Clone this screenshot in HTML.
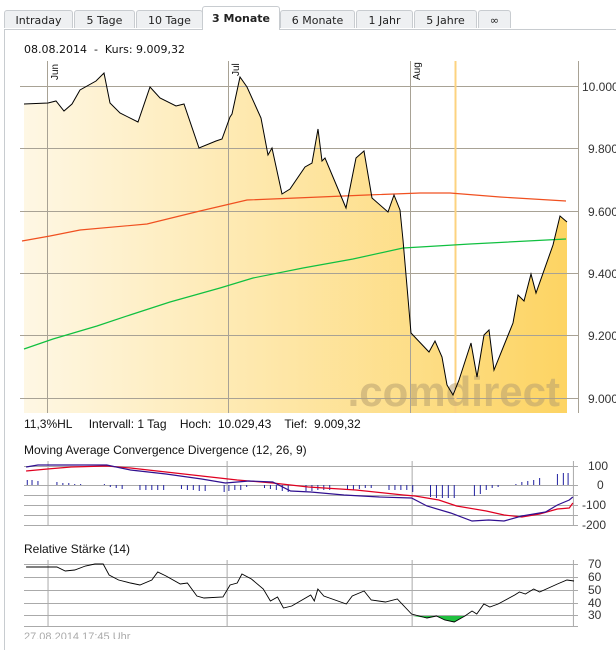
<!DOCTYPE html>
<html><head><meta charset="utf-8"><style>
body{margin:0;background:#fff;font-family:"DejaVu Sans",Verdana,sans-serif;}
.tab{position:absolute;top:10px;height:18px;background:#eef0f2;border:1px solid #c8ccd0;border-bottom:none;border-radius:3px 3px 0 0;font-size:11px;text-align:center;line-height:19px;color:#222;box-sizing:border-box;}
.tab.act{top:6px;height:24px;background:#fff;font-weight:bold;line-height:24px;}
</style></head><body>
<div style="position:absolute;left:4px;top:29px;width:620px;height:620px;border-left:1px solid #c8ccd0;border-top:1px solid #c8ccd0"></div>
<div class="tab" style="left:4px;width:69px">Intraday</div>
<div class="tab" style="left:74px;width:61px">5 Tage</div>
<div class="tab" style="left:136px;width:67px">10 Tage</div>
<div class="tab act" style="left:202px;width:78px">3 Monate</div>
<div class="tab" style="left:280px;width:75px">6 Monate</div>
<div class="tab" style="left:356px;width:57px">1 Jahr</div>
<div class="tab" style="left:414px;width:63px">5 Jahre</div>
<div class="tab" style="left:478px;width:33px">∞</div>
<svg width="616" height="639" style="position:absolute;left:0;top:0" font-family="Liberation Sans,Arial,sans-serif">
<defs><linearGradient id="g" x1="0" x2="1"><stop offset="0" stop-color="#fef7e4"/><stop offset="1" stop-color="#fdd463"/></linearGradient></defs>
<text x="24" y="53" font-size="11" fill="#111" font-family="DejaVu Sans,Verdana,sans-serif" xml:space="preserve">08.08.2014  -  Kurs: 9.009,32</text>
<polygon fill="url(#g)" points="24,413 24,104 48,103 56,101 64,111 72,104 80,90 96,81 104,73 110,103 120,113 138,122 150,87 160,98 176,106 184,104 199,148 216,141 222,139 230,117 232,114 240,77 247,87 261,118 268,155 272,148 282,194 290,189 305,167 312,163 318,129 322,161 325,158 346,208 356,158 364,151 372,198 388,212 394,195 400,210 403,240 411,333 429,352 435,341 442,357 447,385 453,395 459,380 471,343 477,377 484,335 489,330 494,370 513,323 518,295 524,301 531,274 536,293 553,245 560,216 567,222 567,413"/>
<g stroke="#a8a295" stroke-width="1">
<line x1="20" x2="578" y1="86.5" y2="86.5"/><line x1="20" x2="578" y1="148.5" y2="148.5"/><line x1="20" x2="578" y1="211.5" y2="211.5"/><line x1="20" x2="578" y1="273.5" y2="273.5"/><line x1="20" x2="578" y1="335.5" y2="335.5"/><line x1="20" x2="578" y1="398.5" y2="398.5"/>
<line x1="47.5" x2="47.5" y1="61" y2="413"/><line x1="228.5" x2="228.5" y1="61" y2="413"/><line x1="410.5" x2="410.5" y1="61" y2="413"/><line x1="578.5" x2="578.5" y1="61" y2="413"/>
</g>
<line x1="455.5" x2="455.5" y1="61" y2="413" stroke="#fcd380" stroke-width="2"/>
<text x="560" y="406" font-size="42" font-weight="bold" fill="#b8a070" fill-opacity="0.55" text-anchor="end">.comdirect</text>
<g font-size="10" fill="#111"><text transform="translate(58,80) rotate(-90)">Jun</text><text transform="translate(239,76) rotate(-90)">Jul</text><text transform="translate(420,80) rotate(-90)">Aug</text></g>
<polyline fill="none" stroke="#f05020" stroke-width="1.2" points="22,241 50,236 80,230 147,224 200,211 247,200 320,197 367,195 420,193 450,193 500,197 566,201"/>
<polyline fill="none" stroke="#10c040" stroke-width="1.2" points="24,349 53,339 97,326 130,315 170,302 220,288 253,278 303,268 353,259 403,248 420,247 470,244 566,239"/>
<polyline fill="none" stroke="#000" stroke-width="1" points="24,104 48,103 56,101 64,111 72,104 80,90 96,81 104,73 110,103 120,113 138,122 150,87 160,98 176,106 184,104 199,148 216,141 222,139 230,117 232,114 240,77 247,87 261,118 268,155 272,148 282,194 290,189 305,167 312,163 318,129 322,161 325,158 346,208 356,158 364,151 372,198 388,212 394,195 400,210 403,240 411,333 429,352 435,341 442,357 447,385 453,395 459,380 471,343 477,377 484,335 489,330 494,370 513,323 518,295 524,301 531,274 536,293 553,245 560,216 567,222"/>
<g font-size="12" fill="#333"><text x="582" y="91">10.000</text><text x="588" y="153">9.800</text><text x="588" y="216">9.600</text><text x="588" y="278">9.400</text><text x="588" y="340">9.200</text><text x="588" y="403">9.000</text></g>
<text x="24" y="428" font-size="12" fill="#111" xml:space="preserve">11,3%HL     Intervall: 1 Tag    Hoch:  10.029,43    Tief:  9.009,32</text>
<text x="24" y="454" font-size="12" fill="#111">Moving Average Convergence Divergence (12, 26, 9)</text>
<g stroke="#aaa"><line x1="24" x2="578" y1="466.5" y2="466.5"/><line x1="24" x2="578" y1="485.5" y2="485.5"/><line x1="24" x2="578" y1="495.5" y2="495.5"/><line x1="24" x2="578" y1="505.5" y2="505.5"/><line x1="24" x2="578" y1="515.5" y2="515.5"/><line x1="24" x2="578" y1="525.5" y2="525.5"/></g>
<g font-size="12" fill="#333"><text x="588" y="470">100</text><text x="597" y="489">0</text><text x="582" y="509">-100</text><text x="582" y="529">-200</text></g>
<text x="24" y="553" font-size="12" fill="#111">Relative Stärke (14)</text>
<g stroke="#aaa"><line x1="24" x2="578" y1="564.5" y2="564.5"/><line x1="24" x2="578" y1="577.5" y2="577.5"/><line x1="24" x2="578" y1="590.5" y2="590.5"/><line x1="24" x2="578" y1="603.5" y2="603.5"/><line x1="24" x2="578" y1="615.5" y2="615.5"/><line x1="24" x2="578" y1="626.5" y2="626.5"/></g>
<g font-size="12" fill="#333"><text x="588" y="568">70</text><text x="588" y="581">60</text><text x="588" y="594">50</text><text x="588" y="607">40</text><text x="588" y="619">30</text></g>
<g transform="matrix(1.186,0,0,1,0,0)">
<g stroke="#aaa">
<line x1="40.5" x2="40.5" y1="461" y2="526" vector-effect="non-scaling-stroke"/><line x1="191.5" x2="191.5" y1="461" y2="526" vector-effect="non-scaling-stroke"/><line x1="347.5" x2="347.5" y1="461" y2="526" vector-effect="non-scaling-stroke"/><line x1="483.5" x2="483.5" y1="461" y2="526" vector-effect="non-scaling-stroke"/>
<line x1="40.5" x2="40.5" y1="560" y2="627" vector-effect="non-scaling-stroke"/><line x1="191.5" x2="191.5" y1="560" y2="627" vector-effect="non-scaling-stroke"/><line x1="347.5" x2="347.5" y1="560" y2="627" vector-effect="non-scaling-stroke"/><line x1="483.5" x2="483.5" y1="560" y2="627" vector-effect="non-scaling-stroke"/></g>
<path stroke="#2020a0" vector-effect="non-scaling-stroke" d="M23 480V485M27 480V485M32 481V485M48 482V485M53 483V485M58 483V485M63 484V485M68 484V485M88 484V485M93 485V487M98 485V488M103 485V489M118 485V490M123 485V490M128 485V490M133 485V490M138 485V490M153 485V489M158 485V490M163 485V490M168 485V491M173 485V491M189 485V492M193 485V491M198 485V490M203 485V490M208 485V487M223 485V488M228 485V489M233 485V490M238 485V491M243 485V492M258 485V491M263 485V491M268 485V490M273 485V490M278 485V490M293 485V490M298 485V490M303 485V489M308 485V488M313 485V488M328 485V490M333 485V490M338 485V490M343 485V490M348 485V492M363 485V497M368 485V498M373 485V498M378 485V498M383 485V498M400 485V496M405 485V494M410 485V490M415 485V488M420 485V487M435 484V485M440 482V485M445 481V485M450 480V485M455 478V485M470 474V485M475 473V485M479 473V485"/>
<polyline fill="none" stroke="#e00020" stroke-width="1.2" vector-effect="non-scaling-stroke" points="22,471 40,469 60,467 90,466 110,468 140,472 170,476 200,480 230,483 260,487 300,490 340,495 350,496 370,500 385,506 410,511 425,515 440,517 455,514 470,509 480,508 483,503"/>
<polyline fill="none" stroke="#301090" stroke-width="1.2" vector-effect="non-scaling-stroke" points="22,467 32,465 90,465 110,470 140,474 170,479 190,483 210,481 230,482 245,491 262,492 290,495 320,497 347,498 360,506 380,513 398,521 412,520 425,521 440,516 460,512 470,505 480,500 483,497"/>
<polygon fill="#20c040" points="348,616 360,618 368,616 375,620 383,622 392,616"/>
<polyline fill="none" stroke="#000" stroke-width="0.9" vector-effect="non-scaling-stroke" points="22,567 48,567 55,571 63,570 72,566 80,564 87,564 92,575 100,580 110,583 118,585 128,580 133,572 140,576 152,584 158,583 166,596 172,598 188,597 194,585 200,583 204,574 212,579 222,589 228,601 234,597 239,608 246,606 262,595 265,601 268,589 273,596 292,604 297,596 307,591 313,600 325,602 335,599 347,614 360,618 368,616 375,620 383,622 392,616 398,611 402,614 408,604 413,607 420,604 434,595 438,592 443,594 450,589 455,592 470,584 478,580 484,581"/>
</g>
<text x="24" y="640" font-size="11" fill="#aaa">27.08.2014 17:45 Uhr</text>
</svg>
</body></html>
